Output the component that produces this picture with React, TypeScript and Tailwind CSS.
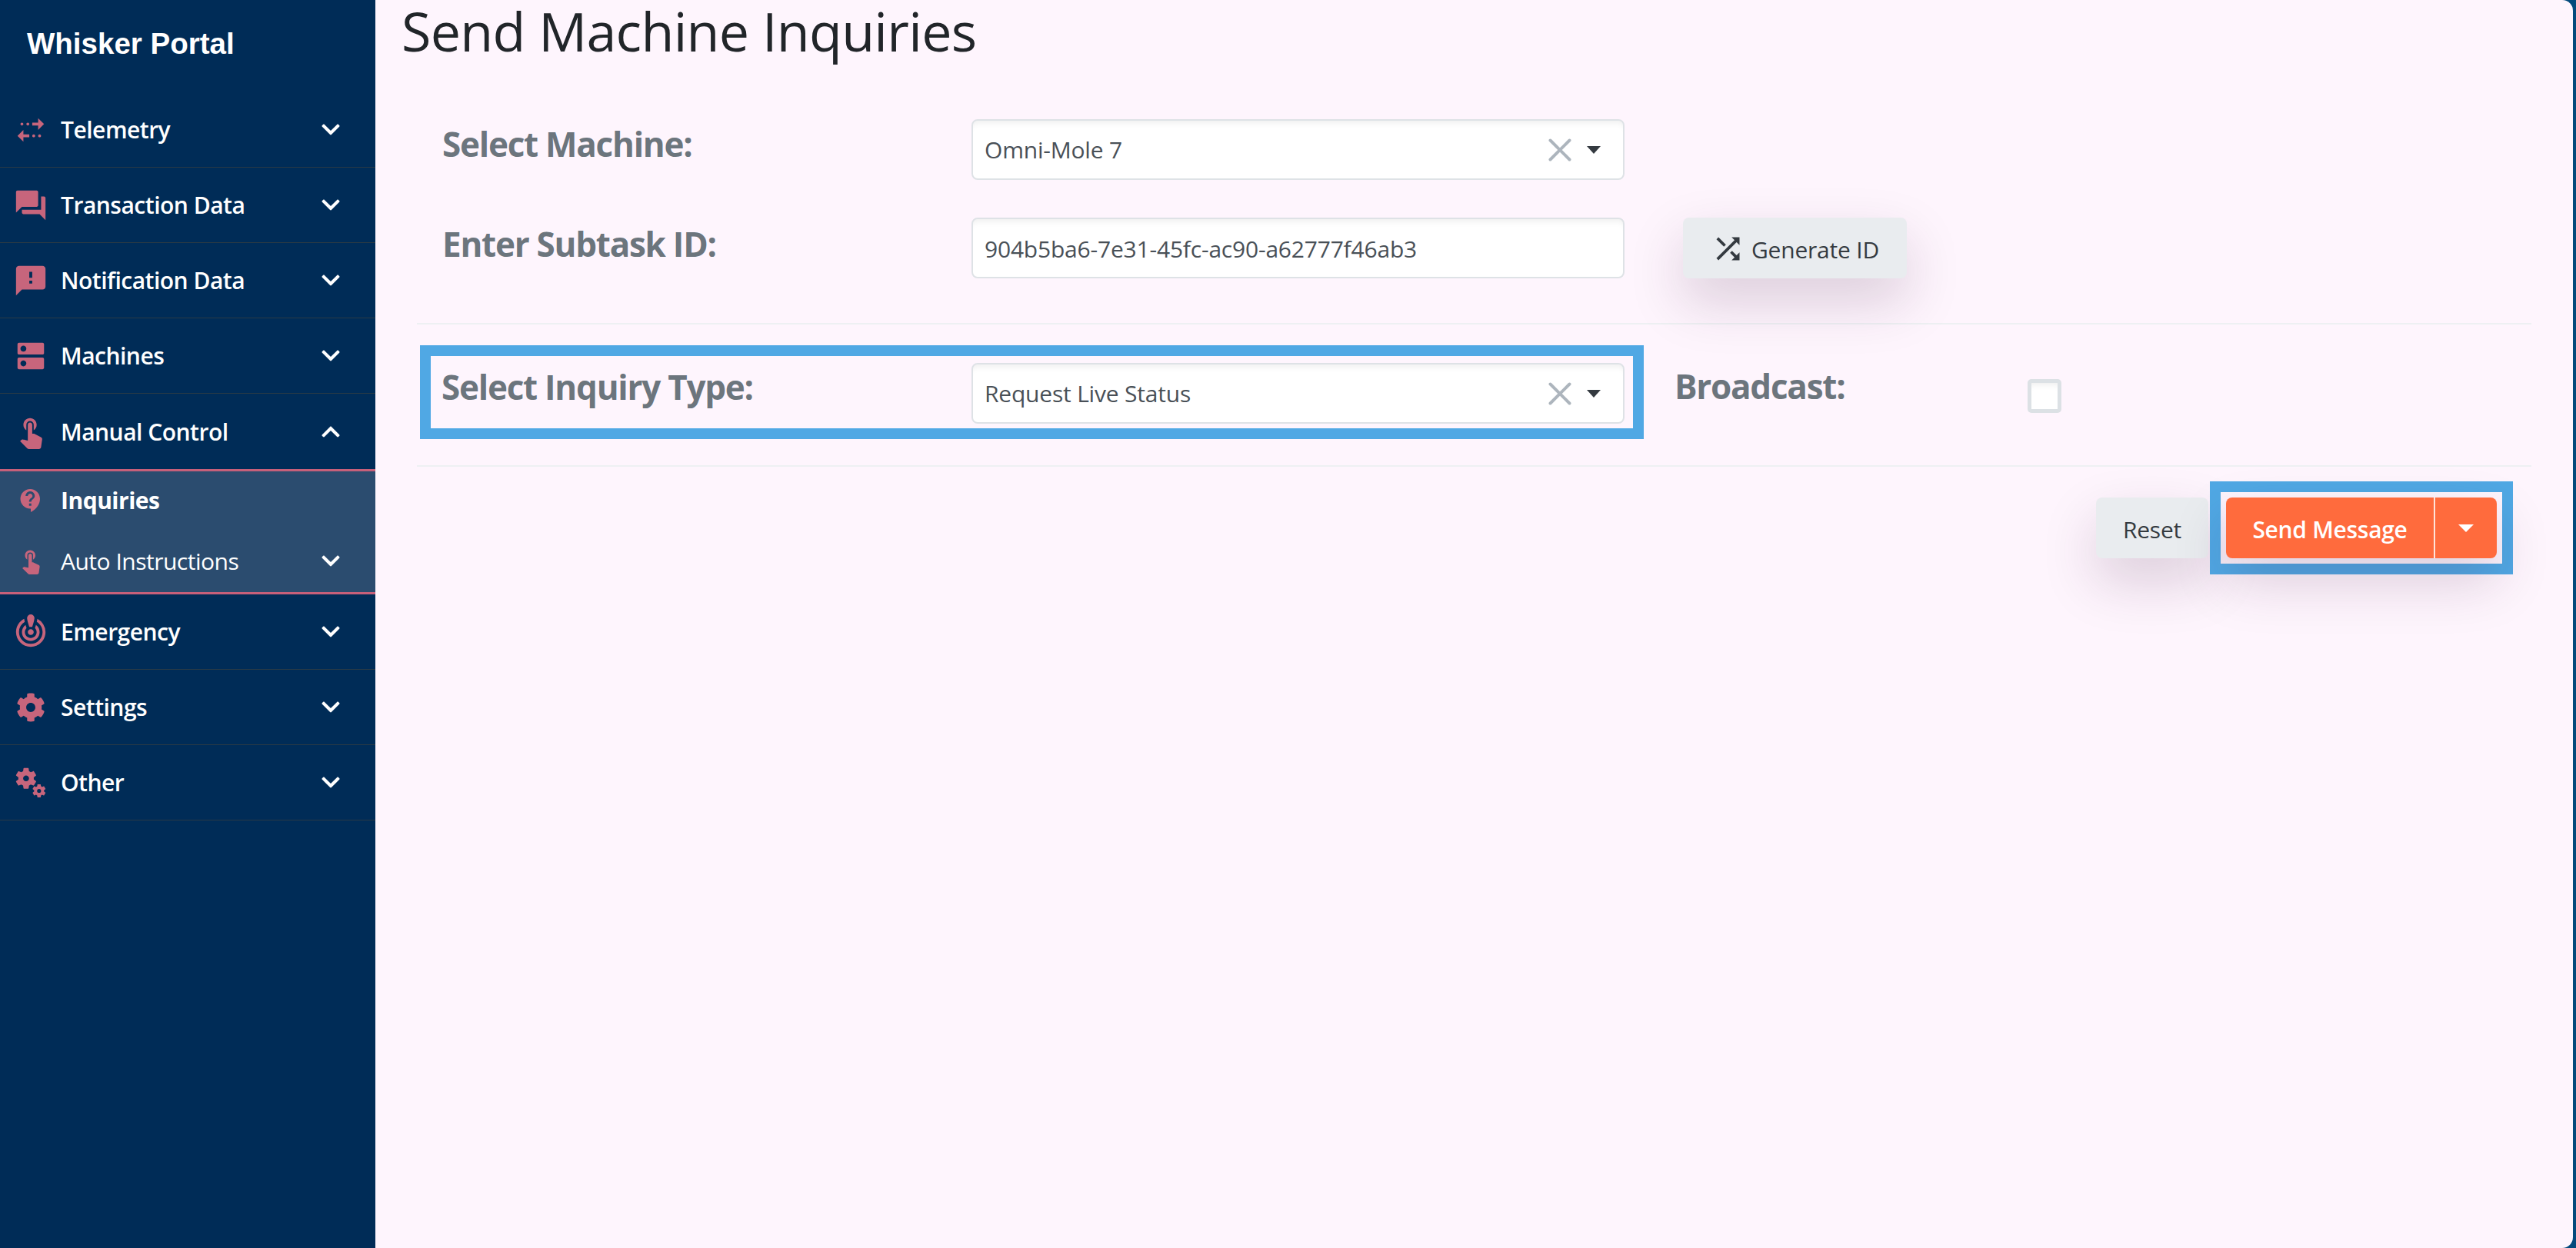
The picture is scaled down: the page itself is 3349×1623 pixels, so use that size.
import { FaChevronDown, FaChevronUp, FaCog } from 'react-icons/fa';
import {
  MdContactSupport,
  MdCrisisAlert,
  MdDns,
  MdFeedback,
  MdMiscellaneousServices,
  MdMultipleStop,
  MdQuestionAnswer,
  MdShuffle,
  MdTouchApp,
} from 'react-icons/md';
import { X } from 'lucide-react';
import type { IconType } from 'react-icons';

const sans = "font-['Open_Sans','Noto_Sans',sans-serif]";

interface NavItem {
  label: string;
  icon: IconType;
  iconClass?: string;
}

const topItems: NavItem[] = [
  { label: 'Telemetry', icon: MdMultipleStop },
  { label: 'Transaction Data', icon: MdQuestionAnswer },
  { label: 'Notification Data', icon: MdFeedback },
  { label: 'Machines', icon: MdDns },
];

const bottomItems: NavItem[] = [
  { label: 'Emergency', icon: MdCrisisAlert },
  { label: 'Settings', icon: FaCog, iconClass: 'h-[38px] w-[38px]' },
  { label: 'Other', icon: MdMiscellaneousServices },
];

function NavIcon({ icon: Icon, className = 'h-[46px] w-[46px]' }: { icon: IconType; className?: string }) {
  return (
    <span className="flex w-[46px] shrink-0 items-center justify-center text-[#c7657c]">
      <Icon className={className} />
    </span>
  );
}

function NavRow({ label, icon, iconClass }: NavItem) {
  return (
    <div className="flex h-[98px] items-center border-b border-[#2a3a45] pl-[17px] pr-[46px]">
      <NavIcon icon={icon} className={iconClass} />
      <span className="ml-[16px] flex-1 text-[30px] font-semibold tracking-[-0.5px] text-white">{label}</span>
      <FaChevronDown className="h-[27px] w-[24px] text-white" />
    </div>
  );
}

function Sidebar() {
  return (
    <aside className="flex w-[488px] shrink-0 flex-col bg-[#002c57]">
      <div className="flex h-[120px] items-start pl-[35px] pt-[30px] font-['Liberation_Sans',sans-serif] text-[38.5px] font-bold leading-[54px] text-white">
        Whisker Portal
      </div>
      {topItems.map(item => (
        <NavRow key={item.label} {...item} />
      ))}
      <div className="flex h-[98px] items-center pl-[17px] pr-[46px]">
        <NavIcon icon={MdTouchApp} />
        <span className="ml-[16px] flex-1 text-[30px] font-semibold tracking-[-0.5px] text-white">Manual Control</span>
        <FaChevronUp className="h-[27px] w-[24px] text-white" />
      </div>
      <div className="flex h-[163px] flex-col border-y-[3px] border-[#c7607a] bg-[#2b4c6f]">
        <div className="flex h-[75px] items-center pl-[17px] pr-[46px]">
          <NavIcon icon={MdContactSupport} className="h-[36px] w-[36px]" />
          <span className="ml-[16px] text-[30px] font-bold tracking-[-0.5px] text-white">Inquiries</span>
        </div>
        <div className="flex h-[82px] items-center pl-[17px] pr-[46px]">
          <NavIcon icon={MdTouchApp} className="h-[36px] w-[36px]" />
          <span className="ml-[16px] flex-1 text-[30px] tracking-[-0.5px] text-white">Auto Instructions</span>
          <FaChevronDown className="h-[27px] w-[24px] text-white" />
        </div>
      </div>
      {bottomItems.map(item => (
        <NavRow key={item.label} {...item} />
      ))}
    </aside>
  );
}

function Label({ children, className }: { children: string; className: string }) {
  return <label className={`text-[44px] font-bold leading-[56px] tracking-[-1.25px] text-[#6c757d] ${className}`}>{children}</label>;
}

function SelectBox({ value }: { value: string }) {
  return (
    <div className="flex h-[79px] w-[849px] shrink-0 items-center rounded-lg border-2 border-[#dee2e6] bg-white pl-[15px] pr-[29px] text-[30px] tracking-[-0.2px] text-[#495057] shadow-[inset_0_10px_10px_-8px_rgba(0,0,0,0.08)]">
      <span className="flex-1">{value}</span>
      <X className="h-[50px] w-[50px] text-[#adb5bd]" strokeWidth={1.9} />
      <span className="ml-[10px] h-0 w-0 border-x-[9px] border-t-[10px] border-x-transparent border-t-[#343a40]" />
    </div>
  );
}

function IdInput({ value }: { value: string }) {
  return (
    <div className="flex h-[79px] w-[849px] shrink-0 items-center rounded-lg border-2 border-[#dee2e6] bg-white pl-[15px] pt-[2px] text-[30px] tracking-[-0.2px] text-[#495057] shadow-[inset_0_10px_10px_-8px_rgba(0,0,0,0.08)]">
      {value}
    </div>
  );
}

export default function App() {
  return (
    <div className={`flex h-[1623px] w-[3349px] overflow-hidden bg-[#034a7c] ${sans}`}>
      <Sidebar />
      <main className="flex w-[2857px] shrink-0 flex-col rounded-r-[14px] bg-[#fef5fd] pl-[54px] pr-[54px]">
        <h1 className="-ml-[20px] h-[155px] text-[70px] font-medium leading-[80px] tracking-[-0.7px] text-[#212529]">Send Machine Inquiries</h1>

        <div className="flex h-[128px] items-start pl-[33px]">
          <Label className="w-[688px] pt-[4px]">Select Machine:</Label>
          <SelectBox value="Omni-Mole 7" />
        </div>
        <div className="flex h-[139px] items-start border-b-2 border-[#eef0f3] pl-[33px]">
          <Label className="w-[688px] pt-[6px]">Enter Subtask ID:</Label>
          <IdInput value="904b5ba6-7e31-45fc-ac90-a62777f46ab3" />
          <button className="ml-[76px] flex h-[79px] w-[291px] items-center justify-center gap-[8px] rounded-lg bg-[#e9ecef] pt-[4px] text-[30px] tracking-[-0.2px] text-[#343a40] shadow-[0_30px_70px_rgba(60,20,60,0.18)]">
            <MdShuffle className="-mt-[3px] h-[45px] w-[45px]" />
            Generate ID
          </button>
        </div>

        <div className="flex h-[185px] items-center border-b-2 border-[#eef0f3]">
          <div className="-mt-[7px] ml-[4px] flex h-[122px] w-[1591px] items-center border-[14px] border-[#50a8e4] pl-[14px] pt-[3px]">
            <Label className="-mt-[18px] w-[689px]">Select Inquiry Type:</Label>
            <SelectBox value="Request Live Status" />
          </div>
          <Label className="-mt-[24px] ml-[40px] w-[459px] tracking-[-1.4px]">Broadcast:</Label>
          <span className="mt-[3px] h-[44px] w-[44px] rounded-[5px] border-[5px] border-[#dce1e5] bg-white shadow-[inset_0_8px_8px_-6px_rgba(0,0,0,0.08)]" />
        </div>

        <div className="flex justify-end pr-[24px] pt-[19px]">
          <button className="mt-[21px] h-[79px] w-[146px] rounded-lg bg-[#e9ecef] pt-[4px] text-[30px] tracking-[-0.2px] text-[#343a40] shadow-[0_30px_70px_rgba(60,20,60,0.18)]">Reset</button>
          <div className="ml-[2px] border-[14px] border-[#50a8e4] px-[7px] py-[7px]">
            <div className="flex h-[79px] w-[352px] rounded-lg bg-[#ff6b3d] text-white shadow-[0_30px_70px_rgba(60,20,60,0.18)]">
              <span className="flex w-[272px] items-center justify-center border-r-2 border-[#ffe3da] pt-[4px] text-[30px] font-semibold tracking-[-0.3px]">Send Message</span>
              <span className="flex flex-1 items-center justify-center">
                <span className="h-0 w-0 border-x-[10px] border-t-[10px] border-x-transparent border-t-white" />
              </span>
            </div>
          </div>
        </div>
      </main>
    </div>
  );
}
